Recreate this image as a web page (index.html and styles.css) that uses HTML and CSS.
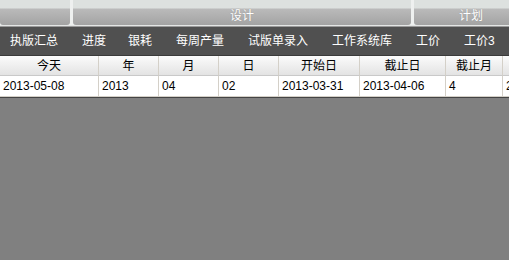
FILE: index.html
```html
<!DOCTYPE html>
<html lang="zh-CN">
<head>
    <meta charset="UTF-8">
    <title>生产管理</title>
    <link rel="stylesheet" href="styles.css">
</head>
<body>
    <div id="tabs">
        <div class="tab tab-small"></div>
        <div class="tab tab-wide">设计</div>
        <div class="tab tab-end">计划</div>
    </div>
    <ul id="menu">
        <li>执版汇总</li>
        <li>进度</li>
        <li>银耗</li>
        <li>每周产量</li>
        <li>试版单录入</li>
        <li>工作系统库</li>
        <li>工价</li>
        <li>工价3</li>
    </ul>
    <div id="grid">
        <div class="head">今天</div>
        <div class="head">年</div>
        <div class="head">月</div>
        <div class="head">日</div>
        <div class="head">开始日</div>
        <div class="head">截止日</div>
        <div class="head">截止月</div>
        <div class="head">截止年</div>
        <div class="cell">2013-05-08</div>
        <div class="cell">2013</div>
        <div class="cell">04</div>
        <div class="cell">02</div>
        <div class="cell">2013-03-31</div>
        <div class="cell">2013-04-06</div>
        <div class="cell">4</div>
        <div class="cell">2013</div>
    </div>
</body>
</html>
```

FILE: styles.css
```css
*{
    margin: 0;
    padding: 0;
}
li{
    list-style: none;
}
body{
    width: 509px;
    height: 260px;
    overflow: hidden;
    background: #808080;
    font-family: "Liberation Sans", "Noto Sans CJK SC", sans-serif;
    font-size: 12px;
}

/* 顶部按钮 */
#tabs{
    display: flex;
    gap: 3px;
    height: 25px;
    background: #eef0ef;
    border-bottom: 1px solid #e4e6e5;
    box-shadow: 0 1px 0 #9a9a9a;
    overflow: hidden;
}
.tab{
    flex: 0 0 auto;
    height: 25px;
    padding-top: 8px;
    box-sizing: border-box;
    line-height: 16px;
    text-align: center;
    color: #fff;
    text-shadow: 0 0 1px #8a8a8a;
    border-radius: 0 0 3px 3px;
    background: linear-gradient(#dde1df 0, #dde1df 8px, #bababa 9px, #a3a3a3 100%);
}
.tab-small{
    width: 70px;
}
.tab-wide{
    width: 338px;
}
.tab-end{
    width: 114px;
}

/* 菜单 */
#menu{
    display: flex;
    gap: 24px;
    height: 28px;
    margin-top: 1px;
    padding-left: 10px;
    background: #505050;
    border-bottom: 1px solid #3a3a3a;
    color: #fff;
    line-height: 28px;
    white-space: nowrap;
}
#menu li:nth-child(2){
    margin-right: -2px;
}

/* 表格 */
#grid{
    display: grid;
    grid-template-columns: 99px 60px 60px 60px 81px 86px 57px 60px;
    width: 563px;
    background: #fff;
    border-bottom: 1px solid #444;
}
.head,.cell{
    height: 20px;
    line-height: 20px;
    box-sizing: border-box;
    border-right: 1px solid #d4d0c8;
    white-space: nowrap;
    overflow: hidden;
}
.head{
    text-align: center;
    background: linear-gradient(#fbfbfb, #e3e3e3);
    border-bottom: 1px solid #c9c9c9;
    color: #000;
}
.cell{
    padding-left: 3px;
    height: 21px;
    border-bottom: 1px solid #d4d0c8;
}
```
